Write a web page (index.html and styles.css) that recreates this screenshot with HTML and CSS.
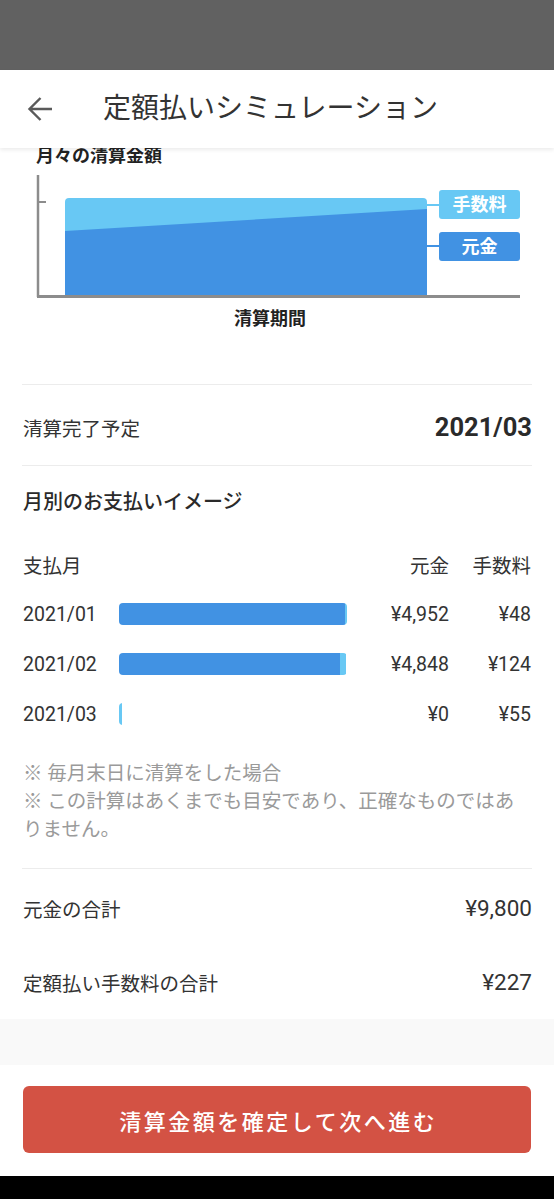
FILE: index.html
```html
<!DOCTYPE html>
<html lang="ja">
<head>
    <meta charset="UTF-8">
    <meta name="viewport" content="width=device-width, initial-scale=1.0">
    <title>定額払いシミュレーション</title>
    <link rel="stylesheet" href="styles.css">
</head>
<body>
    <div class="status-bar"></div>

    <div class="app-bar">
        <button class="back-btn" aria-label="戻る">
            <svg width="26" height="26" viewBox="0 0 26 26"><path d="M25 13H2.5M13.5 2L2.5 13l11 11" fill="none" stroke="#5a5a5a" stroke-width="2.4"/></svg>
        </button>
        <h1 class="app-title">定額払いシミュレーション</h1>
    </div>

    <div class="content">
        <!-- 月々の清算金額 グラフ -->
        <div class="chart-section">
            <div class="chart-title">月々の清算金額</div>
            <div class="chart">
                <svg class="chart-svg" width="554" height="132" viewBox="0 0 554 132">
                    <path d="M65 127 V34 Q65 30 69 30 H423 Q427 30 427 34 V127 Z" fill="#68c8f4"/>
                    <path d="M65 63 L427 41 V127 H65 Z" fill="#4192e3"/>
                    <line x1="427" y1="37" x2="440" y2="37" stroke="#68c8f4" stroke-width="2"/>
                    <line x1="427" y1="78" x2="440" y2="78" stroke="#4192e3" stroke-width="2"/>
                    <line x1="38" y1="7" x2="38" y2="129" stroke="#8c8c8c" stroke-width="2.5"/>
                    <line x1="38" y1="34" x2="46" y2="34" stroke="#8c8c8c" stroke-width="2"/>
                    <line x1="37" y1="128.5" x2="520" y2="128.5" stroke="#8c8c8c" stroke-width="3"/>
                </svg>
                <div class="legend legend-fee">手数料</div>
                <div class="legend legend-principal">元金</div>
            </div>
            <div class="chart-axis-label">清算期間</div>
        </div>

        <div class="summary-row">
            <span class="summary-label">清算完了予定</span>
            <span class="summary-value">2021/03</span>
        </div>

        <!-- 月別のお支払いイメージ -->
        <div class="monthly-section">
            <div class="section-title">月別のお支払いイメージ</div>
            <div class="pay-table">
                <div class="pay-row pay-head">
                    <span class="col-month">支払月</span>
                    <span class="col-num">元金</span>
                    <span class="col-num">手数料</span>
                </div>
                <div class="pay-row">
                    <span>2021/01</span>
                    <div class="bar"><div class="bar-principal" style="width: 225.8px"></div><div class="bar-fee" style="width: 2.2px"></div></div>
                    <span class="col-num">¥4,952</span>
                    <span class="col-num">¥48</span>
                </div>
                <div class="pay-row">
                    <span>2021/02</span>
                    <div class="bar"><div class="bar-principal" style="width: 221.1px"></div><div class="bar-fee" style="width: 5.7px"></div></div>
                    <span class="col-num">¥4,848</span>
                    <span class="col-num">¥124</span>
                </div>
                <div class="pay-row">
                    <span>2021/03</span>
                    <div class="bar"><div class="bar-principal" style="width: 0px"></div><div class="bar-fee" style="width: 2.5px"></div></div>
                    <span class="col-num">¥0</span>
                    <span class="col-num">¥55</span>
                </div>
            </div>
            <p class="notes">※ 毎月末日に清算をした場合<br>※ この計算はあくまでも目安であり、正確なものではありません。</p>
        </div>

        <div class="totals">
            <div class="total-row">
                <span>元金の合計</span>
                <span class="total-value">¥9,800</span>
            </div>
            <div class="total-row">
                <span>定額払い手数料の合計</span>
                <span class="total-value">¥227</span>
            </div>
        </div>

        <div class="spacer"></div>
    </div>

    <div class="footer">
        <button class="confirm-btn">清算金額を確定して次へ進む</button>
    </div>
    <div class="nav-bar"></div>
</body>
</html>
```

FILE: styles.css
```css
* { box-sizing: border-box; margin: 0; padding: 0; }
body {
    font-family: Roboto, "Noto Sans CJK JP", sans-serif;
    color: #333;
    background: white;
    width: 554px;
    overflow: hidden;
}
.status-bar {
    height: 70px;
    background: #616161;
}
.app-bar {
    position: relative;
    z-index: 2;
    height: 78px;
    background: white;
    display: flex;
    align-items: center;
    box-shadow: 0 2px 4px rgba(0,0,0,0.08);
}
.back-btn {
    background: none;
    border: none;
    width: 26px;
    height: 26px;
    margin-left: 27px;
    display: flex;
}
.app-title {
    font-size: 28px;
    font-weight: 400;
    color: #333;
    margin-left: 50px;
    line-height: 1;
}
.content {
    background: white;
}
.chart-section {
    padding-bottom: 54px;
}
.chart-title {
    font-size: 18px;
    font-weight: 700;
    line-height: 20px;
    margin-top: -2px;
    padding-left: 36px;
    color: #222;
}
.chart {
    position: relative;
    height: 132px;
    margin-top: 2px;
}
.chart-svg { display: block; }
.legend {
    position: absolute;
    left: 439px;
    width: 81px;
    height: 29px;
    border-radius: 3px;
    color: white;
    font-size: 18px;
    font-weight: 700;
    line-height: 29px;
    text-align: center;
}
.legend-fee { top: 22px; background: #68c8f4; }
.legend-principal { top: 64px; background: #4192e3; }
.chart-axis-label {
    width: 540px;
    text-align: center;
    font-size: 18px;
    font-weight: 700;
    line-height: 22px;
    margin-top: 8px;
    color: #222;
}
.summary-row {
    margin: 0 22px;
    height: 82px;
    padding-top: 4px;
    display: flex;
    align-items: center;
    justify-content: space-between;
    border-top: 1px solid #ececec;
    border-bottom: 1px solid #ececec;
}
.summary-label { font-size: 19.5px; padding-left: 1px; }
.summary-value {
    font-size: 25.5px;
    font-weight: 700;
    color: #2a2a2a;
}
.monthly-section {
    padding: 22px 23px 24px;
}
.section-title {
    font-size: 20px;
    font-weight: 500;
    line-height: 28px;
    color: #2a2a2a;
}
.pay-table {
    margin-top: 23px;
}
.pay-row {
    display: grid;
    grid-template-columns: 96px 228px 1fr 82px;
    align-items: center;
    height: 50px;
    font-size: 19.5px;
}
.pay-head .col-month { grid-column: 1 / 3; }
.col-num { text-align: right; }
.bar {
    display: flex;
    height: 22px;
    border-radius: 4px;
    overflow: hidden;
}
.bar-principal { background: #4192e3; }
.bar-fee { background: #68c8f4; }
.notes {
    margin-top: 21px;
    font-size: 19.5px;
    line-height: 28px;
    color: #9a9a9a;
}
.totals {
    margin: 0 22px;
    padding-top: 2px;
    border-top: 1px solid #ececec;
}
.total-row {
    height: 74px;
    display: flex;
    align-items: center;
    justify-content: space-between;
    font-size: 19.5px;
    padding-left: 1px;
}
.total-value { font-size: 22.5px; }
.spacer {
    height: 46px;
    background: #f9f9f9;
}
.footer {
    height: 111px;
    padding: 21px 23px 0;
    background: white;
}
.confirm-btn {
    width: 100%;
    height: 67px;
    border: none;
    border-radius: 6px;
    background: #d35244;
    color: white;
    font-family: Roboto, "Noto Sans CJK JP", sans-serif;
    font-size: 22px;
    font-weight: 500;
    letter-spacing: 2.5px;
    text-indent: 2.5px;
}
.nav-bar {
    height: 23px;
    background: #000;
}
```
